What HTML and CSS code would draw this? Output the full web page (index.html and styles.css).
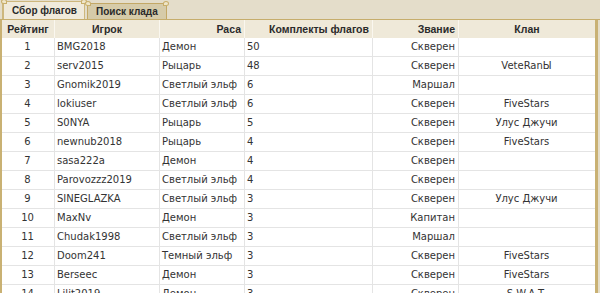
FILE: index.html
```html
<!DOCTYPE html>
<html lang="ru">
<head>
<meta charset="utf-8">
<title>Рейтинг</title>
<link rel="stylesheet" href="styles.css">
</head>
<body>
<div class="window">
  <div class="tabs">
    <div class="tab active"><span class="orn orn-l"></span>Сбор флагов<span class="orn orn-r"></span></div>
    <div class="tab"><span class="orn orn-l"></span>Поиск клада<span class="orn orn-r"></span></div>
  </div>
  <div class="panel">
    <table class="grid">
      <colgroup>
        <col class="c1"><col class="c2"><col class="c3"><col class="c4"><col class="c5"><col class="c6">
      </colgroup>
      <thead>
        <tr>
          <th class="center">Рейтинг</th>
          <th class="center">Игрок</th>
          <th class="right">Раса</th>
          <th class="right">Комплекты флагов</th>
          <th class="right">Звание</th>
          <th class="center">Клан</th>
        </tr>
      </thead>
      <tbody>
        <tr><td class="center">1</td><td>BMG2018</td><td>Демон</td><td>50</td><td class="right">Скверен</td><td class="center"></td></tr>
        <tr><td class="center">2</td><td>serv2015</td><td>Рыцарь</td><td>48</td><td class="right">Скверен</td><td class="center">VeteRanЫ</td></tr>
        <tr><td class="center">3</td><td>Gnomik2019</td><td>Светлый эльф</td><td>6</td><td class="right">Маршал</td><td class="center"></td></tr>
        <tr><td class="center">4</td><td>lokiuser</td><td>Светлый эльф</td><td>6</td><td class="right">Скверен</td><td class="center">FiveStars</td></tr>
        <tr><td class="center">5</td><td>S0NYA</td><td>Рыцарь</td><td>5</td><td class="right">Скверен</td><td class="center">Улус Джучи</td></tr>
        <tr><td class="center">6</td><td>newnub2018</td><td>Рыцарь</td><td>4</td><td class="right">Скверен</td><td class="center">FiveStars</td></tr>
        <tr><td class="center">7</td><td>sasa222a</td><td>Демон</td><td>4</td><td class="right">Скверен</td><td class="center"></td></tr>
        <tr><td class="center">8</td><td>Parovozzz2019</td><td>Светлый эльф</td><td>4</td><td class="right">Скверен</td><td class="center"></td></tr>
        <tr><td class="center">9</td><td>SINEGLAZKA</td><td>Светлый эльф</td><td>3</td><td class="right">Скверен</td><td class="center">Улус Джучи</td></tr>
        <tr><td class="center">10</td><td>MaxNv</td><td>Демон</td><td>3</td><td class="right">Капитан</td><td class="center"></td></tr>
        <tr><td class="center">11</td><td>Chudak1998</td><td>Светлый эльф</td><td>3</td><td class="right">Маршал</td><td class="center"></td></tr>
        <tr><td class="center">12</td><td>Doom241</td><td>Темный эльф</td><td>3</td><td class="right">Скверен</td><td class="center">FiveStars</td></tr>
        <tr><td class="center">13</td><td>Berseec</td><td>Демон</td><td>3</td><td class="right">Скверен</td><td class="center">FiveStars</td></tr>
        <tr><td class="center">14</td><td>Lilit2019</td><td>Демон</td><td>3</td><td class="right">Скверен</td><td class="center">S.W.A.T.</td></tr>
      </tbody>
    </table>
  </div>
</div>
</body>
</html>
```

FILE: styles.css
```css
html, body {
  margin: 0;
  padding: 0;
  overflow: hidden;
  background: #e4ddca;
}

.window {
  width: 600px;
  height: 293px;
  display: flex;
  flex-direction: column;
  font-family: "DejaVu Sans", Tahoma, sans-serif;
  font-size: 10px;
  color: #2e2e2e;
}

.tabs {
  display: flex;
  align-items: flex-end;
  height: 19px;
  padding-left: 2px;
  gap: 2px;
  border-bottom: 1px solid #c6ad6c;
  background: #e4ddca;
  flex: none;
}

.tab {
  position: relative;
  box-sizing: border-box;
  height: 16px;
  padding: 0 8px;
  line-height: 15px;
  font-family: "Liberation Sans", Arial, sans-serif;
  font-size: 10px;
  font-weight: bold;
  color: #2a2a2a;
  background: #d6cba9;
  border: 1px solid #c3a866;
  border-bottom: none;
  border-radius: 2px 2px 0 0;
}

.tab.active {
  height: 18px;
  line-height: 17px;
  padding: 0 7px 0 8px;
  background: #f0eadb;
  border-color: #cdb77d;
  border-left-width: 2px;
}

.orn {
  position: absolute;
  top: -3px;
  width: 6px;
  height: 5px;
  border: 1px solid #c8ae6a;
  border-radius: 50% 50% 0 50%;
  background: #efe6c9;
  box-sizing: border-box;
}
.orn-l { left: -3px; }
.orn-r { right: -3px; border-radius: 50% 50% 50% 0; }

.panel {
  flex: 1;
  border-left: 2px solid #c9b173;
  border-right: 3px solid #c9b173;
  margin-right: 2px;
  background: #ffffff;
  overflow: hidden;
}

.grid {
  width: 593px;
  table-layout: fixed;
  border-collapse: separate;
  border-spacing: 0;
}

.c1 { width: 53px; }
.c2 { width: 105px; }
.c3 { width: 85px; }
.c4 { width: 128px; }
.c5 { width: 86px; }
.c6 { width: 136px; }

.grid th {
  height: 18px;
  padding: 0 3px;
  line-height: 18px;
  font-family: "Liberation Sans", Arial, sans-serif;
  font-size: 10.5px;
  font-weight: bold;
  color: #2b2b2b;
  background: #efe9d9;
  border-right: 1px solid #faf7ef;
  white-space: nowrap;
  overflow: hidden;
}

.grid td {
  height: 18px;
  padding: 0 3px 0 2px;
  line-height: 18px;
  border-right: 1px solid #e4e4e4;
  border-bottom: 1px solid #e4e4e4;
  white-space: nowrap;
  overflow: hidden;
  color: #333333;
}

.grid th:last-child,
.grid td:last-child {
  border-right: none;
}

.left { text-align: left; }
.center { text-align: center; }
.right { text-align: right; }
```
